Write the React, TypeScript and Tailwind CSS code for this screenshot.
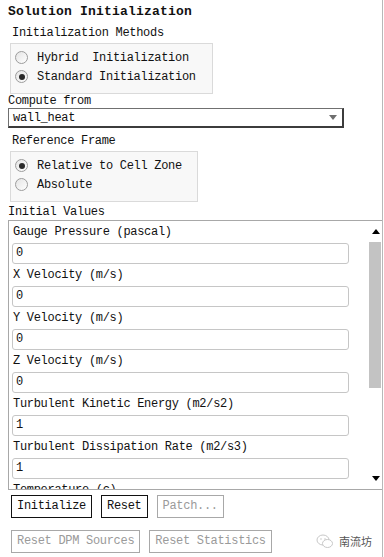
import React from "react";

const mono = { fontFamily: '"Liberation Mono", "Noto Sans CJK SC", monospace' };

function Radio({ checked, label }: { checked?: boolean; label: string }) {
  return (
    <div className="flex items-center h-[19px]">
      <span className="w-[13px] h-[13px] rounded-full border border-[#9c9c9c] bg-gradient-to-br from-[#e4e4e4] to-white flex items-center justify-center shrink-0">
        {checked && <span className="w-[6px] h-[6px] rounded-full bg-[#2a2a2a]" />}
      </span>
      <span className="ml-[9px] whitespace-pre">{label}</span>
    </div>
  );
}

function Field({ label, value }: { label: string; value: string }) {
  return (
    <>
      <div className="h-[22px] leading-[22px] pl-[4px] whitespace-pre">{label}</div>
      <div className="ml-[3px] w-[337px] h-[21px] border border-[#c6c6c6] rounded-[3px] pl-[3px] leading-[19px] bg-white">
        {value}
      </div>
    </>
  );
}

function Btn({ label, disabled }: { label: string; disabled?: boolean }) {
  return (
    <button
      className={
        disabled
          ? "h-[23px] px-[5px] border border-[#a8a8a8] text-[#9a9a9a] bg-white leading-[21px]"
          : "h-[23px] px-[5px] border border-[#111] text-[#111] bg-white leading-[21px]"
      }
    >
      {label}
    </button>
  );
}

const fields = [
  ["Gauge Pressure (pascal)", "0"],
  ["X Velocity (m/s)", "0"],
  ["Y Velocity (m/s)", "0"],
  ["Z Velocity (m/s)", "0"],
  ["Turbulent Kinetic Energy (m2/s2)", "1"],
  ["Turbulent Dissipation Rate (m2/s3)", "1"],
  ["Temperature (c)", "300"],
];

export default function App() {
  return (
    <div
      className="w-[383px] h-[557px] bg-white border-r border-[#b8b8b8] pl-[8px] text-[12px] tracking-[-0.3px] text-[#111] overflow-hidden"
      style={mono}
    >
      <div className="h-[24px] leading-[24px] text-[13px] font-bold tracking-[0.2px]">Solution Initialization</div>
      <div className="h-[18px] leading-[18px] ml-[4px]">Initialization Methods</div>
      <div className="mt-[1px] ml-[2px] w-[203px] h-[51px] bg-[#f8f8f8] border border-[#dadada] pt-[4px] pl-[4px]">
        <Radio label="Hybrid  Initialization" />
        <Radio checked label="Standard Initialization" />
      </div>

      <div className="h-[14px] leading-[14px]">Compute from</div>
      <div className="w-[336px] h-[20px] flex items-center border border-[#707070] border-r-2 border-b-2 border-r-[#3c3c3c] border-b-[#3c3c3c] pl-[4px] pr-[5px]">
        <span className="flex-1">wall_heat</span>
        <svg width="8" height="5" viewBox="0 0 8 5">
          <path d="M0 0 H8 L4 5 Z" fill="#6e6e6e" />
        </svg>
      </div>

      <div className="mt-[4px] h-[18px] leading-[18px] ml-[4px]">Reference Frame</div>
      <div className="mt-[1px] ml-[2px] w-[188px] h-[51px] bg-[#f8f8f8] border border-[#dadada] pt-[4px] pl-[4px]">
        <Radio checked label="Relative to Cell Zone" />
        <Radio label="Absolute" />
      </div>

      <div className="h-[18px] leading-[20px]">Initial Values</div>
      <div className="w-[374px] h-[270px] border-l border-t border-b border-[#a8a8a8] flex">
        <div className="w-[360px] h-full overflow-hidden">
          {fields.map(([l, v]) => (
            <Field key={l} label={l} value={v} />
          ))}
        </div>
        <div className="w-[13px] h-full flex flex-col">
          <div className="h-[21px] flex items-center justify-center">
            <svg width="8" height="5" viewBox="0 0 8 5">
              <path d="M0 5 H8 L4 0 Z" fill="#000" />
            </svg>
          </div>
          <div className="flex-1">
            <div className="w-[12px] h-[146px] bg-[#c3c3c3]" />
          </div>
          <div className="h-[21px] flex items-center justify-center">
            <svg width="8" height="5" viewBox="0 0 8 5">
              <path d="M0 0 H8 L4 5 Z" fill="#000" />
            </svg>
          </div>
        </div>
      </div>

      <div className="mt-[5px] ml-[3px] flex gap-[9px]">
        <Btn label="Initialize" />
        <Btn label="Reset" />
        <Btn label="Patch..." disabled />
      </div>
      <div className="mt-[12px] ml-[3px] flex items-center gap-[9px]">
        <Btn label="Reset DPM Sources" disabled />
        <Btn label="Reset Statistics" disabled />
        <div className="ml-auto mr-[10px] flex items-center gap-[5px] text-[#555]">
          <svg width="18" height="15" viewBox="0 0 18 15">
            <ellipse cx="7" cy="6" rx="6" ry="5" fill="none" stroke="#c8c8c8" strokeWidth="1" />
            <ellipse cx="11.5" cy="9.5" rx="5" ry="4" fill="white" stroke="#c8c8c8" strokeWidth="1" />
            <circle cx="5" cy="5" r="0.8" fill="#c8c8c8" />
            <circle cx="9" cy="5" r="0.8" fill="#c8c8c8" />
          </svg>
          <span className="text-[11px] tracking-normal" style={{ fontFamily: '"Noto Sans CJK SC", sans-serif' }}>南流坊</span>
        </div>
      </div>
    </div>
  );
}
